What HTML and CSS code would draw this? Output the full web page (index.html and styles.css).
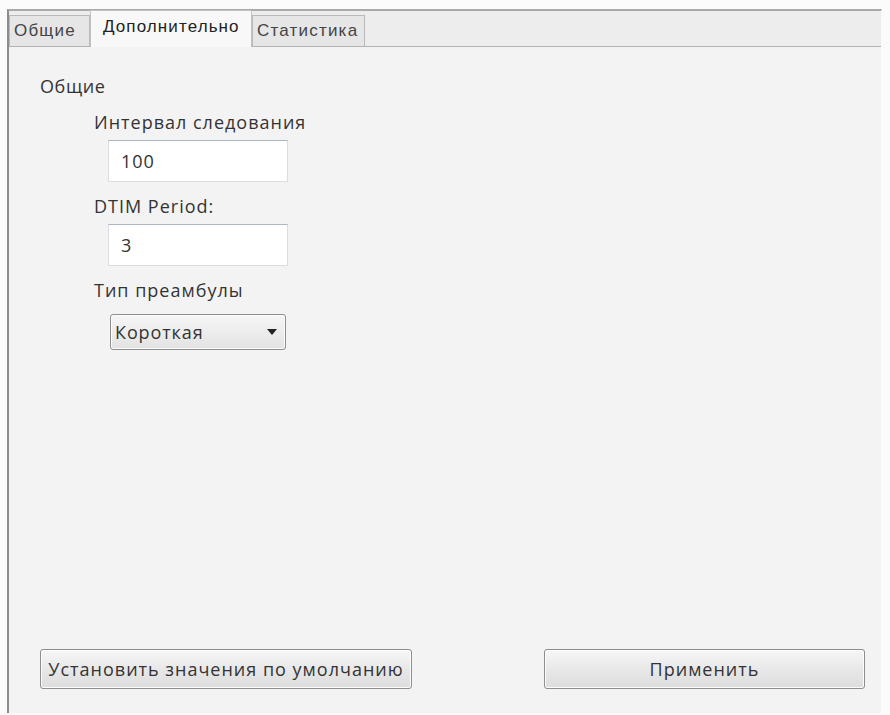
FILE: index.html
```html
<!DOCTYPE html>
<html lang="ru">
  <head>
    <meta charset="UTF-8" />
    <title>Дополнительно</title>
    <link rel="stylesheet" href="styles.css">
  </head>
  <body>
    <div class="window">
      <div class="tabbar">
        <div class="tab">Общие</div>
        <div class="tab tab-active">Дополнительно</div>
        <div class="tab">Статистика</div>
      </div>
      <div class="pane">
        <div class="group-title">Общие</div>
        <div class="fields">
          <label class="field-label">Интервал следования</label>
          <input class="text-input" type="text" value="100" />
          <label class="field-label">DTIM Period:</label>
          <input class="text-input" type="text" value="3" />
          <label class="field-label">Тип преамбулы</label>
          <div class="select">
            <span>Короткая</span>
            <svg class="select-arrow" width="10" height="6" viewBox="0 0 10 6">
              <path d="M0 0 H10 L5 6 Z" fill="#222" />
            </svg>
          </div>
        </div>
        <div class="actions">
          <button class="btn btn-defaults">Установить значения по умолчанию</button>
          <button class="btn btn-apply">Применить</button>
        </div>
      </div>
    </div>
  </body>
</html>
```

FILE: styles.css
```css
body {
  margin: 0;
  background-color: #fbfbfb;
  font-family: 'Open Sans', 'Noto Sans', sans-serif;
  color: #333;
}
.window {
  margin: 9px 8px 0 7px;
  height: 702px;
  border-top: 2px solid #a9a9a9;
  border-left: 2px solid #8c8c8c;
  border-right: 1px solid #fafafa;
  display: flex;
  flex-direction: column;
  background-color: #f3f3f3;
}
.tabbar {
  height: 35px;
  display: flex;
  align-items: flex-end;
  background-color: #ededed;
  border-bottom: 1px solid #b4b4b4;
}
.tab {
  height: 31px;
  box-sizing: border-box;
  padding: 0 4px;
  display: flex;
  align-items: center;
  font-family: 'Liberation Sans', Arial, sans-serif;
  font-size: 17px;
  letter-spacing: 1.2px;
  color: #444;
  background-color: #e6e6e6;
  border: 1px solid #b9b9b9;
  border-bottom: none;
}
.tab:first-child {
  width: 81px;
}
.tab-active {
  width: 162px;
  height: 37px;
  margin-bottom: -1px;
  padding: 0 10px 4px 12px;
  letter-spacing: 1.1px;
  background-color: #f8f8f8;
  color: #222;
  border-color: #c3c3c3;
}
.tab-active + .tab {
  width: 113px;
}
.pane {
  flex: 1;
  display: flex;
  flex-direction: column;
  padding: 29px 16px 24px 31px;
}
.group-title {
  font-size: 18px;
  line-height: 20px;
  letter-spacing: 0.6px;
}
.fields {
  display: flex;
  flex-direction: column;
  align-items: flex-start;
  padding-left: 54px;
}
.field-label {
  font-size: 18px;
  line-height: 20px;
  letter-spacing: 1px;
  margin-top: 14px;
}
.field-label:first-child {
  margin-top: 16px;
}
.text-input {
  margin: 8px 0 0 14px;
  width: 180px;
  height: 42px;
  box-sizing: border-box;
  padding: 0 12px;
  border: 1px solid #d9dde2;
  border-top-color: #aeb7c0;
  background-color: #fff;
  font-family: inherit;
  font-size: 18px;
  letter-spacing: 1px;
  color: #333;
  outline: none;
}
.select {
  margin: 14px 0 0 16px;
  width: 176px;
  height: 36px;
  box-sizing: border-box;
  padding: 0 8px 0 4px;
  display: flex;
  align-items: center;
  justify-content: space-between;
  font-size: 18px;
  letter-spacing: 0.9px;
  color: #333;
  border: 1px solid #8f8f8f;
  border-radius: 3px;
  background: linear-gradient(#f6f6f6, #e3e3e3);
  box-shadow: inset 0 0 0 1px #fbfbfb;
}
.select-arrow {
  display: block;
}
.actions {
  margin-top: auto;
  display: flex;
  justify-content: space-between;
  align-items: center;
}
.btn {
  height: 40px;
  box-sizing: border-box;
  font-family: inherit;
  font-size: 18px;
  letter-spacing: 1px;
  color: #333;
  border: 1px solid #8e8e8e;
  border-radius: 3px;
  background: linear-gradient(#f7f7f7, #e8e8e8 50%, #dddddd);
  box-shadow: inset 0 0 0 1px #fcfcfc;
  padding: 0;
}
.btn-defaults {
  width: 372px;
}
.btn-apply {
  width: 321px;
}
```
